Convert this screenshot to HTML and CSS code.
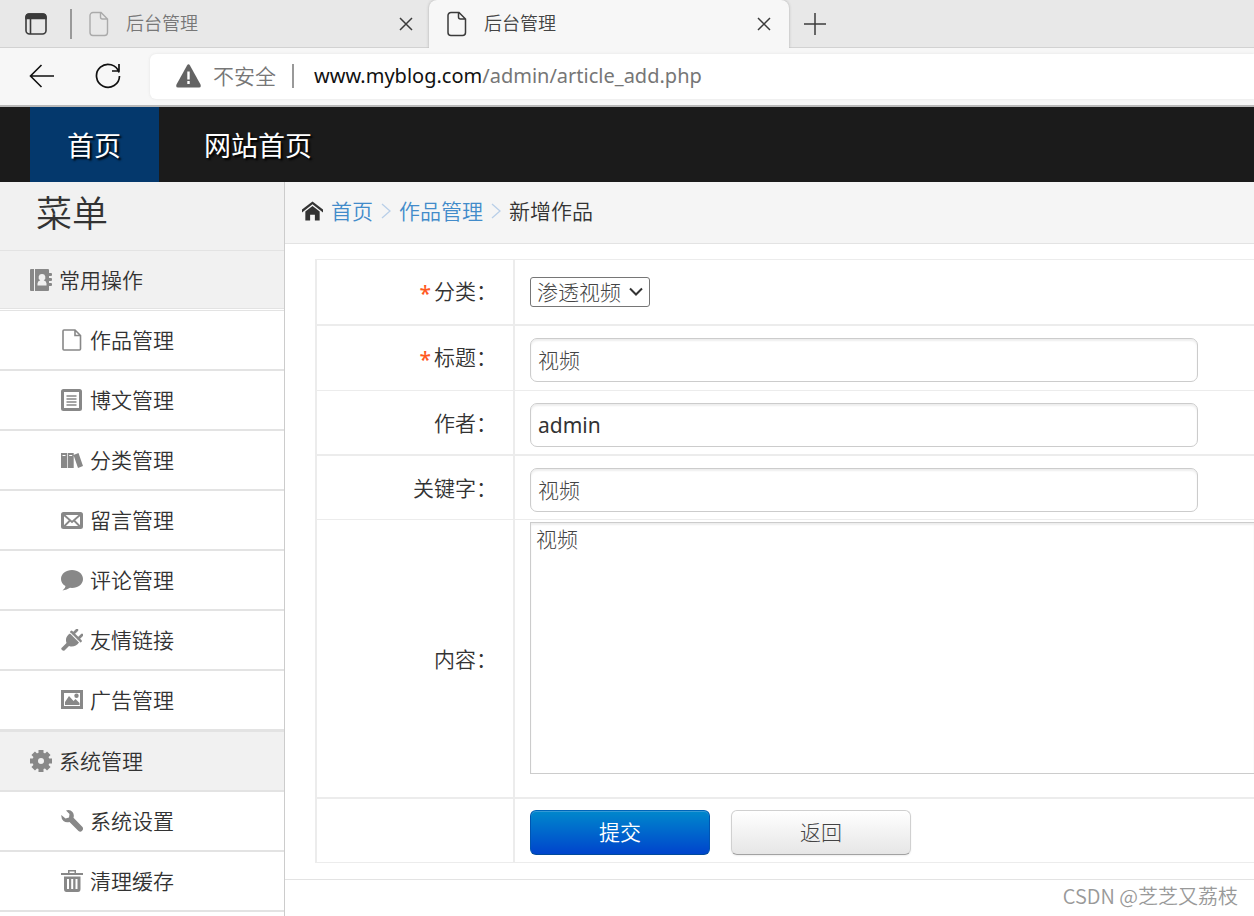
FILE: index.html
```html
<!DOCTYPE html>
<html lang="zh-CN">
<head>
<meta charset="utf-8">
<title>后台管理</title>
<link rel="stylesheet" href="styles.css">
</head>
<body>
<div class="browser">
  <div class="tabstrip">
    <button class="tab-menu" type="button" aria-label="标签页操作">
      <svg width="24" height="24" viewBox="0 0 24 24" fill="none" stroke="#3b3b3b" stroke-width="1.6"><rect x="2" y="2" width="20" height="20" rx="3.5"/><path d="M2 6.5V5a3 3 0 0 1 3-3h14a3 3 0 0 1 3 3v1.500z" fill="#3b3b3b"/><path d="M6.500 6v16"/></svg>
    </button>
    <span class="tab-divider"></span>
    <div class="tab">
      <svg width="20" height="26" viewBox="0 0 20 26" fill="none" stroke="#aaa" stroke-width="1.4"><path d="M4 1.500h8l6.500 6.500v13.500a3 3 0 0 1-3 3H4a3 3 0 0 1-3-3v-17a3 3 0 0 1 3-3zM11.500 1.500v4.500a2 2 0 0 0 2 2h5"/></svg>
      <a class="tab-title" href="#">后台管理</a>
      <button class="tab-close" type="button" aria-label="关闭"><svg width="14" height="14" viewBox="0 0 14 14" stroke="#3b3b3b" stroke-width="1.500"><path d="M1 1l12 12M13 1L1 13"/></svg></button>
    </div>
    <div class="tab tab-active">
      <svg width="20" height="26" viewBox="0 0 20 26" fill="none" stroke="#3b3b3b" stroke-width="1.500"><path d="M4 1.500h8l6.500 6.500v13.500a3 3 0 0 1-3 3H4a3 3 0 0 1-3-3v-17a3 3 0 0 1 3-3zM11.500 1.500v4.500a2 2 0 0 0 2 2h5"/></svg>
      <a class="tab-title" href="#">后台管理</a>
      <button class="tab-close" type="button" aria-label="关闭"><svg width="14" height="14" viewBox="0 0 14 14" stroke="#3b3b3b" stroke-width="1.500"><path d="M1 1l12 12M13 1L1 13"/></svg></button>
    </div>
    <button class="tab-new" type="button" aria-label="新建标签页"><svg width="22" height="22" viewBox="0 0 22 22" stroke="#3b3b3b" stroke-width="1.500"><path d="M11 0v22M0 11h22"/></svg></button>
  </div>
  <div class="toolbar">
    <button class="tool" type="button" aria-label="后退"><svg width="26" height="24" viewBox="0 0 26 24" fill="none" stroke="#111" stroke-width="1.600"><path d="M12.500 1L1.500 12l11 11M1.500 12H25"/></svg></button>
    <button class="tool" type="button" aria-label="刷新"><svg width="26" height="26" viewBox="0 0 26 26" fill="none" stroke="#111" stroke-width="1.700"><path d="M24 9.500A11.500 11.500 0 1 0 24.500 13M24 1v7h-7"/></svg></button>
    <div class="address">
      <svg width="25" height="24" viewBox="0 0 25 24"><path d="M11 1.500q1.500-2.500 3 0l10.500 19q1 3-1.500 3h-21q-2.500 0-1.500-3z" fill="#636363"/><path d="M12.500 7.500v8M12.500 17v3" stroke="#fff" stroke-width="2.400"/></svg>
      <span class="insecure">不安全</span>
      <span class="address-divider"></span>
      <span class="url">www.myblog.com<span class="url-path">/admin/article_add.php</span></span>
    </div>
  </div>
</div>

<nav class="topnav">
  <a class="topnav-link topnav-current" href="#">首页</a>
  <a class="topnav-link" href="#">网站首页</a>
</nav>

<div class="layout">
  <aside class="sidebar">
    <h1 class="sidebar-title">菜单</h1>
    <a class="group group-first" href="#"><svg class="icon" viewBox="0 0 22 22"><path d="M1 0h3v22H1q-1 0-1-1V1q0-1 1-1zM5 0h13q1 0 1 1v3h2q1 0 1 1v1q0 1-1 1h-2v2h2q1 0 1 1v1q0 1-1 1h-2v2h2q1 0 1 1v1q0 1-1 1h-2v4q0 1-1 1H5z"/><path d="M12 5a3.300 3.300 0 0 1 1.700 6.200q2.800.8 2.800 3.300v2h-9v-2q0-2.500 2.800-3.300A3.300 3.300 0 0 1 12 5z" fill="#f1f1f1"/></svg>常用操作</a>
    <ul class="menu">
      <li><a class="item" href="#"><svg class="icon" viewBox="0 0 22 22"><path d="M3 1h11l5.500 5.500V20q0 1-1 1H3q-1 0-1-1V2q0-1 1-1zM14 1v5.500h5.500" fill="none" stroke="#888" stroke-width="1.600"/></svg>作品管理</a></li>
      <li><a class="item" href="#"><svg class="icon" viewBox="0 0 22 22"><rect x="1.500" y="1.500" width="18" height="19" rx="1" fill="none" stroke="#888" stroke-width="3"/><path d="M5.500 7h10M5.500 10h10M5.500 13h10M5.500 16h10" stroke="#888" stroke-width="1.500"/></svg>博文管理</a></li>
      <li><a class="item" href="#"><svg class="icon" viewBox="0 0 22 22"><path d="M0 4h6v15H0zM6.700 4h6v15h-6zM12.500 6l5-2 4.500 13-5 2z"/><path d="M1.500 6.500h3M8.200 6.500h3" stroke="#fff"/></svg>分类管理</a></li>
      <li><a class="item" href="#"><svg class="icon" viewBox="0 0 22 22"><rect x="1.500" y="4.500" width="19" height="14" rx="1" fill="none" stroke="#888" stroke-width="3"/><path d="M2.500 5.500l8.500 7.500 8.500-7.500M2.500 18l6-6M19.500 18l-6-6" fill="none" stroke="#888" stroke-width="1.800"/></svg>留言管理</a></li>
      <li><a class="item" href="#"><svg class="icon" viewBox="0 0 22 22"><path d="M11 1c6 0 11 3.800 11 9s-5 9-11 9l-2-.2Q6 21 1.500 21.500 4.500 19.500 4.500 17 0 14.500 0 10c0-5.200 5-9 11-9z"/></svg>评论管理</a></li>
      <li><a class="item" href="#"><svg class="icon" viewBox="0 0 22 22"><path d="M9 4.500L18 13.500Q15 18 9.500 17.500L8 17l-4.500 4.500Q2 22 .8 20.800T1 18.500L5.500 14Q3.500 8 9 4.500z"/><path d="M10.500 3L19.500 12M12 5l4-4M17 10l4-4" stroke="#888" stroke-width="2.600" stroke-linecap="round"/><path d="M9.500 4L18.500 13" stroke="#fff" stroke-width=".8"/></svg>友情链接</a></li>
      <li><a class="item" href="#"><svg class="icon" viewBox="0 0 22 22"><rect x="1.500" y="2.500" width="19" height="16" fill="none" stroke="#888" stroke-width="3"/><path d="M4 16v-3l4-6 4.500 5 2-2 4 4v2z"/><circle cx="15.500" cy="6.800" r="2.200"/></svg>广告管理</a></li>
    </ul>
    <a class="group" href="#"><svg class="icon" viewBox="0 0 22 22"><g stroke="#888" stroke-width="5"><path d="M11 0v22M0 11h22M3.200 3.200l15.600 15.600M18.800 3.200L3.200 18.800"/></g><circle cx="11" cy="11" r="8.500"/><circle cx="11" cy="11" r="3" fill="#f1f1f1"/></svg>系统管理</a>
    <ul class="menu">
      <li><a class="item" href="#"><svg class="icon" viewBox="0 0 22 22"><path d="M5 .5Q9-.8 11.500 2q2 2.500 1 5.800L21.500 17q1.300 2-.4 3.800t-3.600.2L8.500 12Q5 13 2.500 11 0 8.500.3 5l4.200 3.500L8 7.500 8.500 4z"/></svg>系统设置</a></li>
      <li><a class="item" href="#"><svg class="icon" viewBox="0 0 22 22"><path d="M0 3h7V0h8v3h7v2H0zM8.500 1.500V3h5V1.500z" fill-rule="evenodd"/><path d="M3 6.500h16.500V19q0 3-2.500 3H5.500Q3 22 3 19zM6 9v10h2V9zM10.200 9v10h2V9zM14.500 9v10h2V9z" fill-rule="evenodd"/></svg>清理缓存</a></li>
    </ul>
  </aside>

  <main class="content">
    <div class="breadcrumb">
      <svg width="21" height="20" viewBox="0 0 22 20" fill="#333"><path d="M11 0l11 8.500v3L11 3 0 11.500v-3z"/><path d="M3.500 10.500L11 4.800l7.500 5.700V20H13.500v-6h-5v6h-5z"/></svg>
      <a class="crumb" href="#">首页</a>
      <svg width="10" height="16" viewBox="0 0 10 16" fill="none" stroke="#b9cfe8" stroke-width="1.300"><path d="M1 1l8 7-8 7"/></svg>
      <a class="crumb" href="#">作品管理</a>
      <svg width="10" height="16" viewBox="0 0 10 16" fill="none" stroke="#b9cfe8" stroke-width="1.300"><path d="M1 1l8 7-8 7"/></svg>
      <span>新增作品</span>
    </div>
    <form class="form">
      <table class="fields">
        <tr class="row row-thick row-first"><th><span class="required">*</span><label for="category">分类：</label></th><td>
          <span class="picker"><select id="category" class="select"><option>渗透视频</option></select><svg class="caret" width="14" height="10" viewBox="0 0 14 10" fill="none" stroke="#333" stroke-width="2"><path d="M1 1.500l6 6 6-6"/></svg></span></td></tr>
        <tr class="row"><th><span class="required">*</span><label for="title">标题：</label></th><td><input id="title" class="text" type="text" value="视频"></td></tr>
        <tr class="row row-thick"><th><label for="author">作者：</label></th><td><input id="author" class="text text-dark" type="text" value="admin"></td></tr>
        <tr class="row row-short"><th><label for="keywords">关键字：</label></th><td><input id="keywords" class="text" type="text" value="视频"></td></tr>
        <tr class="row row-thick row-body"><th><label for="body">内容：</label></th><td><textarea id="body" class="area">视频</textarea></td></tr>
        <tr class="row row-short"><th></th><td><div class="actions"><button class="btn btn-primary" type="button">提交</button><button class="btn" type="button">返回</button></div></td></tr>
      </table>
    </form>
    <footer class="footer"></footer>
  </main>
</div>
<div class="watermark">CSDN @芝芝又荔枝</div>
</body>
</html>
```
FILE: styles.css
```css
* { box-sizing: border-box; }

body {
  margin: 0;
  height: 100vh;
  overflow: hidden;
  display: flex;
  flex-direction: column;
  background: #fff;
  color: #333;
  font: 350 21px/30px "Noto Sans", "Noto Sans CJK SC", sans-serif;
}

button, input, select, textarea { font: inherit; color: inherit; }
a { color: inherit; text-decoration: none; }
svg { display: block; flex: none; }

/* Browser frame */
.browser { flex: none; border-bottom: 2px solid #b9b9b9; }

.tabstrip {
  display: flex;
  align-items: center;
  height: 48px;
  background: #e8e8e8;
  box-shadow: inset 0 -1px #d2d2d2;
}

.tab-menu, .tab-close, .tab-new, .tool {
  display: flex;
  padding: 0;
  border: 0;
  background: none;
}

.tab-menu { margin-left: 24px; }
.tab-divider { width: 2px; height: 30px; margin-left: 22px; background: #999; }

.tab {
  display: flex;
  align-items: center;
  flex: 0 1 357px;
  height: 48px;
  padding: 0 16px 0 17px;
  gap: 17px;
  color: #777;
  font-size: 18px;
}

.tab-title { flex: 1; padding-bottom: 2px; }

.tab-active {
  flex-basis: 360px;
  border-radius: 8px 8px 0 0;
  background: #f7f7f7;
  box-shadow: 0 0 3px #aaa;
  clip-path: inset(0 -4px 0 -4px);
  color: #444;
  padding-left: 18px;
  padding-right: 18px;
}

.tab-new { margin-left: 15px; }

.toolbar { display: flex; align-items: center; height: 57px; padding-bottom: 1px; background: #f7f7f7; }
.tool { margin-left: 29px; }
.tool + .tool { margin-left: 40px; }

.address {
  display: flex;
  align-items: center;
  flex: 1;
  height: 45px;
  margin-left: 29px;
  padding-left: 26px;
  border-radius: 6px 0 0 6px;
  background: #fff;
  box-shadow: 0 0 3px #e2e2e2;
}

.insecure { margin-left: 12px; color: #777; }
.address-divider { width: 2px; height: 24px; margin: 0 20px 0 16px; background: #999; }
.url { color: #111; font-size: 20px; font-weight: 400; }
.url-path { color: #767676; }

/* Site navigation */
.topnav { display: flex; flex: none; height: 75px; padding-left: 30px; background: #1b1b1b; }

.topnav-link {
  display: flex;
  align-items: center;
  padding: 2px 45px 0;
  color: #fff;
  font-size: 27px;
  font-weight: 400;
  text-shadow: 2px 2px 2px #000;
}

.topnav-current { padding: 2px 38px 0 37px; background: #04386c; }

.layout { display: flex; flex: 1; min-height: 0; }

/* Sidebar */
.sidebar { flex: none; width: 285px; border-right: 1px solid #ccc; }

.sidebar-title {
  margin: 0;
  height: 69px;
  padding: 2px 0 0 36px;
  border-bottom: 1px solid #e3e3e3;
  background: #f1f1f1;
  font-size: 36px;
  font-weight: 350;
  line-height: 60px;
}

.group, .item { display: flex; align-items: center; gap: 7px; }

.group {
  height: 61px;
  padding-left: 30px;
  border-top: 1px solid #e3e3e3;
  border-bottom: 2px solid #e3e3e3;
  background: #f1f1f1;
}

.group-first { height: 60px; border-top: 0; border-bottom: 3px double #e3e3e3; background-clip: padding-box; }
.menu { margin: 0; padding: 0; list-style: none; }
.item { height: 60px; padding-left: 61px; border-bottom: 2px solid #e3e3e3; }
.icon { width: 22px; height: 22px; fill: #888; }

/* Content */
.content { flex: 1; min-width: 0; }

.breadcrumb {
  display: flex;
  align-items: center;
  gap: 8px;
  height: 62px;
  padding: 0 0 4px 17px;
  border-bottom: 1px solid #e3e3e3;
  background: #f5f5f5;
}

.crumb { color: #428bca; }

.form { padding: 15px 0 16px 30px; }

.fields {
  width: 100%;
  border-spacing: 0;
  border-top: 1px solid #ececec;
  border-left: 2px solid #ececec;
}

.row { height: 65px; }
.row-first { height: 66px; }
.row-short { height: 64px; }
.row-body { height: 279px; }
.row th, .row td { padding: 0; border-bottom: 1px solid #ececec; }
.row-thick th, .row-thick td { border-bottom-width: 2px; }
.row th { width: 198px; padding-right: 16px; border-right: 2px solid #ececec; text-align: right; font-weight: 350; }
.row td { padding-left: 15px; }
.row-body td { padding-top: 2px; vertical-align: top; }
.required { margin-right: 3px; color: #ff5a1f; font-weight: 500; vertical-align: middle; }

.picker { display: grid; width: 120px; align-items: center; }
.select, .caret { grid-area: 1 / 1; }
.caret { justify-self: end; margin-right: 7px; pointer-events: none; }

.select {
  appearance: none;
  width: 100%;
  height: 30px;
  padding: 0 6px;
  border: 1px solid #767676;
  border-radius: 3px;
  background: #fff;
  color: #444;
  font-weight: 300;
  line-height: 28px;
}

.text {
  display: block;
  width: 100%;
  max-width: 668px;
  height: 44px;
  margin-top: 4px;
  padding: 0 7px 2px;
  border: 1px solid #ccc;
  border-radius: 7px;
  box-shadow: inset 0 2px 2px #eee;
  background-color: #fff;
  color: #444;
  font-weight: 300;
}

.text-dark { padding-bottom: 0; color: #333; font-weight: 400; }

.area {
  display: block;
  width: 100%;
  height: 252px;
  padding: 1px 5px;
  border: 1px solid #ccc;
  border-right: 0;
  box-shadow: inset 0 2px 2px #eee;
  color: #444;
  font-weight: 300;
  resize: none;
}

.actions { display: flex; gap: 21px; padding-top: 3px; }

.btn {
  width: 180px;
  height: 45px;
  border: 1px solid #d0d0d0;
  border-bottom-color: #a2a2a2;
  border-radius: 6px;
  background: linear-gradient(#fff, #e6e6e6);
  box-shadow: 0 1px 2px #eee;
  color: #444;
  font-weight: 300;
}

.btn-primary {
  border-color: #0064b8 #0055b0 #004a9c;
  background: linear-gradient(#08c, #04c);
  box-shadow: inset 0 1px #3399d6;
  color: #fff;
  font-weight: 350;
}

.footer { border-top: 1px solid #e3e3e3; }

.watermark {
  position: absolute;
  right: 16px;
  bottom: 5px;
  color: #999;
  font: 350 20px/30px "Noto Sans CJK SC", sans-serif;
}
```
